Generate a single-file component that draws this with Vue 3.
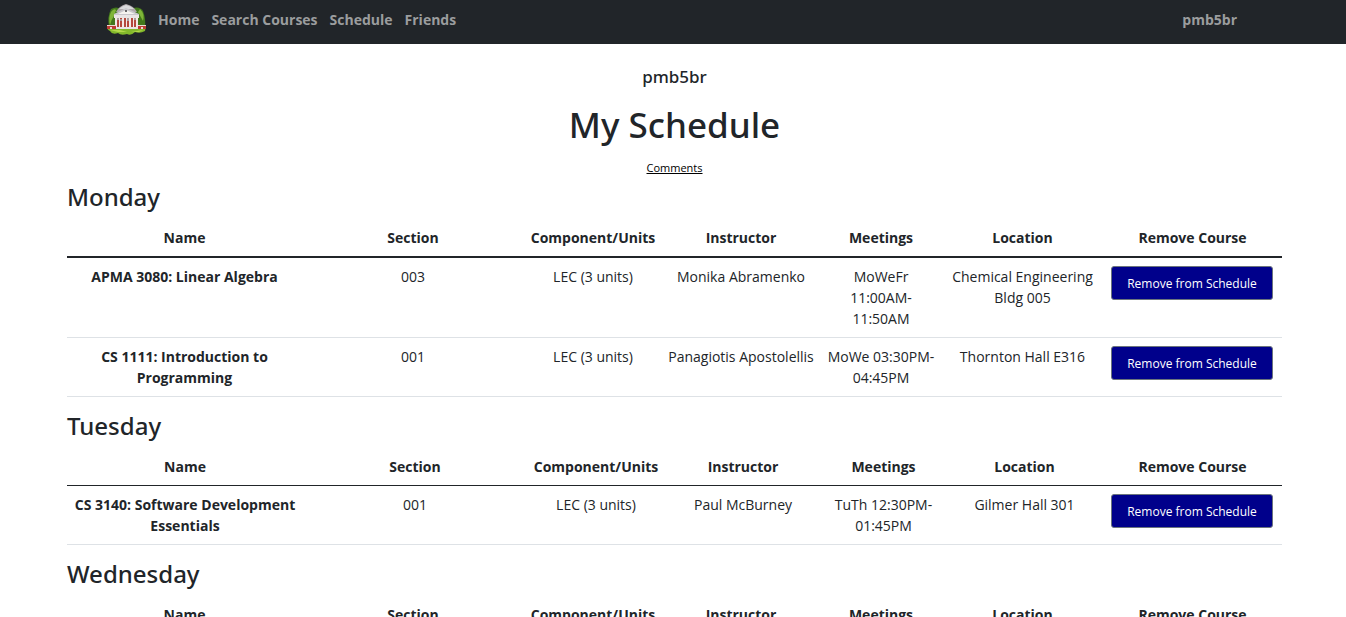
<script setup>
const navLinks = ['Home', 'Search Courses', 'Schedule', 'Friends']

const headings = ['Name', 'Section', 'Component/Units', 'Instructor', 'Meetings', 'Location', 'Remove Course']

const wideColumns = [235, 222, 138, 158, 122, 161, 179]
const narrowColumns = [236, 224, 138, 156, 125, 157, 179]

const days = [
  {
    name: 'Monday',
    columns: wideColumns,
    strong: true,
    courses: [
      {
        name: 'APMA 3080: Linear Algebra',
        section: '003',
        units: 'LEC (3 units)',
        instructor: 'Monika Abramenko',
        meetings: 'MoWeFr 11:00AM-11:50AM',
        location: 'Chemical Engineering Bldg 005'
      },
      {
        name: 'CS 1111: Introduction to Programming',
        section: '001',
        units: 'LEC (3 units)',
        instructor: 'Panagiotis Apostolellis',
        meetings: 'MoWe 03:30PM-04:45PM',
        location: 'Thornton Hall E316'
      }
    ]
  },
  {
    name: 'Tuesday',
    columns: narrowColumns,
    strong: false,
    courses: [
      {
        name: 'CS 3140: Software Development Essentials',
        section: '001',
        units: 'LEC (3 units)',
        instructor: 'Paul McBurney',
        meetings: 'TuTh 12:30PM-01:45PM',
        location: 'Gilmer Hall 301'
      }
    ]
  },
  { name: 'Wednesday', columns: wideColumns, strong: true, courses: [] }
]
</script>

<template>
  <div class="page">
    <nav class="navbar">
      <a class="brand" href="#" aria-label="Rotunda">
        <svg class="logo" viewBox="0 0 40 32" aria-hidden="true">
          <path d="M4 6Q9 3 14 6L15 24H2Q0 14 4 6Z" fill="#43781c" />
          <path d="M26 5Q33 3 36 8Q39 16 38 24H27Z" fill="#43781c" />
          <path d="M4 9Q7 5 9 7L7 13Q4 17 3 22Q1 15 4 9ZM33 6Q38 11 36 18L31 9Z" fill="#7fb538" />
          <path d="M0 23H39L38 28Q33 31 28 29Q24 33 20 31Q14 33 11 30Q5 32 3 28Q0 27 0 23Z" fill="#83b82b" />
          <path d="M3 27L13 27L20 29L11 29ZM24 29L36 27L32 29Z" fill="#b4d84b" />
          <path d="M9 9Q12 3 19 1Q27 3 30 9Z" fill="#b0a9ad" />
          <path d="M12 6Q15 3 19 2Q24 3 27 6Z" fill="#dadadd" />
          <path d="M7 11L19 5L32 11V13H7Z" fill="#c9c8cd" />
          <path d="M11 11L19 7L28 11Z" fill="#f5f3f0" />
          <circle cx="19" cy="8" r="1" fill="#3b3b3f" />
          <path d="M8 13H31V25H8Z" fill="#b5483d" />
          <path d="M8 13H10V25H8ZM12 13H13V25H12ZM15 13H17V25H15ZM19 13H20V25H19ZM22 13H24V25H22ZM26 13H27V25H26ZM29 13H31V25H29Z" fill="#f4e9e6" />
          <path d="M10 15H12V17H10ZM13 16H15V18H13ZM20 15H22V18H20ZM27 15H29V17H27Z" fill="#a99c9d" />
          <path d="M7 12H32V15H7ZM9 24H31V26H9Z" fill="#e9e5e5" />
          <path d="M0 22H9V26H0ZM31 22H39V26H31Z" fill="#bd3d34" />
          <path d="M0 22H9V23H0ZM31 22H39V23H31ZM3 24H5V26H3ZM34 24H36V26H34Z" fill="#eedbd4" />
        </svg>
      </a>
      <a v-for="link in navLinks" :key="link" class="nav-link" href="#">{{ link }}</a>
      <a class="nav-link user" href="#">pmb5br</a>
    </nav>

    <main class="content">
      <header class="intro">
        <h5 class="username">pmb5br</h5>
        <h1 class="title">My Schedule</h1>
        <a class="comments" href="#">Comments</a>
      </header>

      <section v-for="day in days" :key="day.name" class="day">
        <h3 class="day-name">{{ day.name }}</h3>
        <table class="schedule" :class="{ strong: day.strong }">
          <colgroup>
            <col v-for="(width, i) in day.columns" :key="i" :style="{ width: width + 'px' }" />
          </colgroup>
          <thead>
            <tr>
              <th v-for="heading in headings" :key="heading" scope="col">{{ heading }}</th>
            </tr>
          </thead>
          <tbody>
            <tr v-for="course in day.courses" :key="course.name">
              <th scope="row">{{ course.name }}</th>
              <td>{{ course.section }}</td>
              <td>{{ course.units }}</td>
              <td>{{ course.instructor }}</td>
              <td>{{ course.meetings }}</td>
              <td>{{ course.location }}</td>
              <td class="action"><button type="button" class="remove">Remove from Schedule</button></td>
            </tr>
          </tbody>
        </table>
      </section>
    </main>
  </div>
</template>

<style>
body {
  margin: 0;
  background: #fff;
}

/* The page scrolls without a visible bar */
html {
  scrollbar-width: none;
}
</style>

<style scoped>
.page {
  font-family: "Open Sans", "Noto Sans", sans-serif;
  font-size: 14px;
  line-height: 21px;
  color: #212529;
}

.navbar {
  display: flex;
  align-items: center;
  gap: 12px;
  height: 38px;
  padding: 0 109px 6px 107px;
  background: #212529;
}

.brand {
  display: flex;
  margin-right: -1px;
}

.logo {
  width: 40px;
  height: 32px;
}

.nav-link {
  font-size: 14px;
  font-weight: 700;
  color: #9b9d9e;
  text-decoration: none;
}

.user {
  margin-left: auto;
}

.content {
  padding: 22px 64px 0 67px;
}

.intro {
  display: flex;
  flex-direction: column;
  align-items: center;
}

.username,
.title,
.day-name {
  font-family: "Noto Sans", "Open Sans", sans-serif;
  font-weight: 500;
}

.username {
  margin: 0 0 7px;
  font-size: 17px;
  line-height: 22px;
}

.title {
  margin: 8px 0 12px;
  font-size: 35px;
  line-height: 44px;
}

.comments {
  margin-bottom: 5px;
  font-size: 11px;
  line-height: 18px;
  color: #000;
}

.day-name {
  margin: 0 0 7px;
  font-size: 24px;
  line-height: 30px;
}

.schedule {
  width: 100%;
  margin-bottom: 14px;
  table-layout: fixed;
  border-collapse: separate;
  border-spacing: 0;
  text-align: center;
}

.schedule th,
.schedule td {
  padding: 8px 4px;
  border-bottom: 1px solid #dee2e6;
  vertical-align: top;
}

.schedule th {
  font-weight: 700;
}

.schedule thead th {
  border-bottom-color: #212529;
}

.schedule.strong thead th {
  border-bottom-width: 2px;
}

.schedule .action {
  padding: 8px 9px 8px 8px;
}

.remove {
  display: block;
  width: 100%;
  height: 34px;
  padding: 0;
  border: 1px solid #6c757d;
  border-radius: 3px;
  background: #00008b;
  color: #fff;
  font-family: inherit;
  font-size: 12px;
  white-space: nowrap;
}
</style>
